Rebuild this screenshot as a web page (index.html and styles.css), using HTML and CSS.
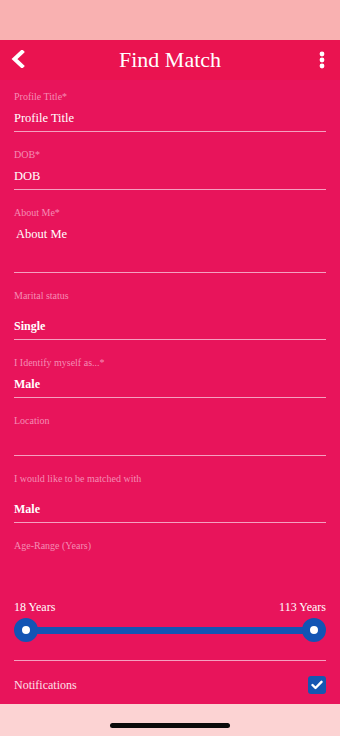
FILE: index.html
```html
<!DOCTYPE html>
<html>
<head>
<meta charset="utf-8">
<link rel="stylesheet" href="styles.css">
</head>
<body>
<div class="screen">
  <div class="statusbar"></div>
  <header class="appbar">
    <svg class="back" width="16" height="18" viewBox="0 0 16 18"><path d="M12 2 L4.5 9 L12 16" fill="none" stroke="#fff" stroke-width="4" stroke-linecap="square" stroke-linejoin="miter"/></svg>
    <h1 class="title">Find Match</h1>
    <svg class="more" width="8" height="18" viewBox="0 0 8 18"><circle cx="4" cy="3" r="2.4" fill="#fff"/><circle cx="4" cy="9" r="2.4" fill="#fff"/><circle cx="4" cy="15" r="2.4" fill="#fff"/></svg>
  </header>
  <main class="form">
    <div class="field first">
      <div class="label">Profile Title*</div>
      <div class="value">Profile Title</div>
    </div>
    <div class="field">
      <div class="label">DOB*</div>
      <div class="value">DOB</div>
    </div>
    <div class="field area">
      <div class="label">About Me*</div>
      <div class="value">About Me</div>
    </div>
    <div class="field select">
      <div class="label">Marital status</div>
      <div class="value strong">Single</div>
    </div>
    <div class="field">
      <div class="label">I Identify myself as...*</div>
      <div class="value strong">Male</div>
    </div>
    <div class="field">
      <div class="label">Location</div>
      <div class="value"></div>
    </div>
    <div class="field select">
      <div class="label">I would like to be matched with</div>
      <div class="value strong">Male</div>
    </div>
    <div class="age">
      <div class="label">Age-Range (Years)</div>
      <div class="range-labels"><span>18 Years</span><span>113 Years</span></div>
      <div class="slider">
        <span class="thumb"></span>
        <span class="track"></span>
        <span class="thumb"></span>
      </div>
    </div>
    <div class="notify">
      <span class="notify-label">Notifications</span>
      <span class="checkbox">
        <svg width="12" height="10" viewBox="0 0 12 10"><path d="M1.5 5 L4.5 8 L10.5 1.8" fill="none" stroke="#fff" stroke-width="2.4" stroke-linecap="round" stroke-linejoin="round"/></svg>
      </span>
    </div>
  </main>
  <footer class="homebar"><span class="indicator"></span></footer>
</div>
</body>
</html>
```
FILE: styles.css
```css
* { box-sizing: border-box; }
html, body { margin: 0; padding: 0; }
body { font-family: "Liberation Serif", "DejaVu Serif", serif; color: #fff; }
.screen { width: 340px; height: 736px; display: flex; flex-direction: column; background: #e8145b; overflow: hidden; }
.statusbar { height: 40px; background: #f9b1b1; flex: none; }
.appbar { height: 40px; flex: none; background: #ea1350; display: flex; align-items: center; justify-content: space-between; padding: 0 14px 0 10px; }
.back { display: block; margin-top: -2px; }
.title { margin: 0; font-weight: normal; font-size: 22px; line-height: 24px; color: #fff; margin-right: 4px; }
.more { display: block; margin-top: -1px; }
.form { flex: 1; min-height: 0; padding: 0 14px; display: flex; flex-direction: column; }
.field { padding-top: 17px; border-bottom: 1px solid #f5a0c0; flex: none; }
.field.first { padding-top: 11px; }
.label { font-size: 10px; line-height: 12px; color: #f58cb4; }
.value { font-size: 12.5px; line-height: 16px; height: 21px; color: #fff; margin-top: 7px; padding-bottom: 5px; }
.field.area .value { margin-top: 7px; padding-left: 2px; height: 46px; padding-bottom: 30px; }
.field.select .value { margin-top: 16px; }
.value.strong { font-weight: bold; font-size: 12px; }
.age { padding-top: 17px; border-bottom: 1px solid #f5a0c0; padding-bottom: 18px; flex: none; }
.range-labels { display: flex; justify-content: space-between; margin-top: 47px; font-size: 12px; line-height: 16px; }
.slider { display: flex; align-items: center; height: 24px; margin-top: 3px; }
.thumb { width: 24px; height: 24px; border-radius: 50%; background: #fff; border: 8px solid #1254b4; flex: none; }
.track { flex: 1; height: 7px; background: #1254b4; margin: 0 -1px; }
.notify { display: flex; align-items: center; justify-content: space-between; height: 42px; padding-top: 5px; flex: none; }
.notify-label { font-size: 12px; line-height: 16px; color: #fce0ea; }
.checkbox { width: 18px; height: 18px; border-radius: 3px; background: #1457b2; display: flex; align-items: center; justify-content: center; }
.checkbox svg { display: block; }
.homebar { height: 32px; flex: none; background: #fcd3d3; display: flex; justify-content: center; padding-top: 19px; }
.indicator { width: 120px; height: 5px; border-radius: 3px; background: #0a0a0a; }
```
